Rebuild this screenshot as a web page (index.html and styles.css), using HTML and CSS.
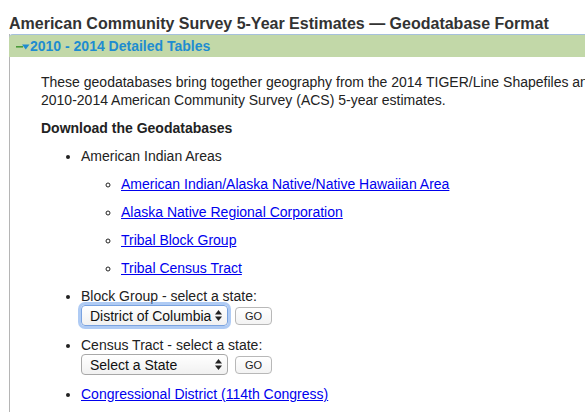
FILE: index.html
```html
<!DOCTYPE html>
<html>
<head>
<meta charset="utf-8">
<link rel="stylesheet" href="styles.css">
</head>
<body>
<div class="page">
  <h1 class="title">American Community Survey 5-Year Estimates — Geodatabase Format</h1>
  <div class="panel">
    <div class="panel-head">
      <svg class="toggle" width="14" height="8" viewBox="0 0 14 8"><rect x="0" y="3" width="7" height="1.6" fill="#4a9a3a"/><polygon points="6,1.5 13.5,1.5 9.75,6.5" fill="#1e8cd0"/></svg>
      <span class="panel-title">2010 - 2014 Detailed Tables</span>
    </div>
    <div class="panel-body">
      <p class="intro">These geodatabases bring together geography from the 2014 TIGER/Line Shapefiles and the<br>2010-2014 American Community Survey (ACS) 5-year estimates.</p>
      <h2 class="section">Download the Geodatabases</h2>
      <ul class="list">
        <li>American Indian Areas
          <ul class="sub">
            <li><a href="#">American Indian/Alaska Native/Native Hawaiian Area</a></li>
            <li><a href="#">Alaska Native Regional Corporation</a></li>
            <li><a href="#">Tribal Block Group</a></li>
            <li><a href="#">Tribal Census Tract</a></li>
          </ul>
        </li>
        <li>Block Group - select a state:
          <div class="pick">
            <span class="select focus"><select><option>District of Columbia</option></select><svg class="arrows" width="7" height="11" viewBox="0 0 7 11"><polygon points="3.5,0 7,4.5 0,4.5" fill="#222"/><polygon points="0,6.5 7,6.5 3.5,11" fill="#222"/></svg></span>
            <button class="go">GO</button>
          </div>
        </li>
        <li>Census Tract - select a state:
          <div class="pick">
            <span class="select"><select><option>Select a State</option></select><svg class="arrows" width="7" height="11" viewBox="0 0 7 11"><polygon points="3.5,0 7,4.5 0,4.5" fill="#222"/><polygon points="0,6.5 7,6.5 3.5,11" fill="#222"/></svg></span>
            <button class="go">GO</button>
          </div>
        </li>
        <li><a href="#">Congressional District (114th Congress)</a></li>
      </ul>
    </div>
  </div>
</div>
</body>
</html>
```
FILE: styles.css
```css
html, body {
  margin: 0;
  padding: 0;
  background: #fff;
  overflow: hidden;
}
body {
  font-family: "Liberation Sans", Arial, sans-serif;
  color: #222;
}
.page {
  width: 640px;
  padding-left: 9px;
}
.title {
  margin: 14px 0 0;
  font-size: 16px;
  line-height: 20px;
  font-weight: bold;
  color: #333;
  white-space: nowrap;
}
.panel {
  border-left: 1px solid #b5b5b5;
}
.panel-head {
  display: flex;
  align-items: center;
  height: 22px;
  margin-left: -1px;
  background: #c2d8a8;
  border-top: 1px solid #a6c0dc;
  border-top-left-radius: 4px;
  padding-left: 7px;
}
.toggle {
  display: block;
  margin-top: 1px;
}
.panel-title {
  font-size: 14px;
  line-height: 22px;
  font-weight: bold;
  color: #1e8cd0;
}
.panel-body {
  padding: 16px 0 20px 31px;
  font-size: 14px;
  line-height: 18px;
}
.intro {
  margin: 0;
  white-space: nowrap;
}
.section {
  margin: 10px 0 0;
  font-size: 14px;
  line-height: 18px;
  font-weight: bold;
}
.list, .sub {
  margin: 0;
  padding-left: 40px;
}
.list { list-style: disc; }
.sub { list-style: circle; }
.list li {
  margin-top: 10px;
}
a {
  color: #0000ee;
  text-decoration: underline;
}
.pick {
  display: flex;
  align-items: center;
  height: 21px;
  gap: 6px;
}
.select {
  position: relative;
  display: block;
  width: 147px;
  height: 21px;
  box-sizing: border-box;
}
.select select {
  -webkit-appearance: none;
  appearance: none;
  width: 147px;
  height: 21px;
  box-sizing: border-box;
  border: 1px solid #a8a8a8;
  border-radius: 4px;
  background: linear-gradient(#ffffff, #f1f1f1);
  font-family: "Liberation Sans", Arial, sans-serif;
  font-size: 14px;
  color: #111;
  padding: 0 0 0 8px;
  margin: 0;
  outline: none;
}
.select.focus select {
  border-color: #7aa3e0;
  box-shadow: 0 0 0 3px rgba(110, 160, 235, 0.55);
}
.arrows {
  position: absolute;
  right: 6px;
  top: 5px;
  pointer-events: none;
}
.go {
  width: 37px;
  height: 18px;
  box-sizing: border-box;
  border: 1px solid #b8b8b8;
  border-radius: 4px;
  background: linear-gradient(#ffffff, #f3f3f3);
  font-family: "Liberation Sans", Arial, sans-serif;
  font-size: 11px;
  color: #222;
  padding: 0;
  margin: 1px 0 0 1px;
}
```
